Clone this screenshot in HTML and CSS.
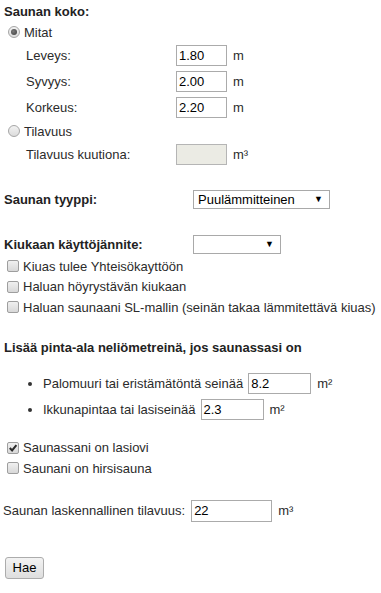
FILE: index.html
```html
<!DOCTYPE html>
<html lang="fi">
<head>
<meta charset="utf-8">
<title>Saunalaskuri</title>
<link rel="stylesheet" href="styles.css">
</head>
<body>
<form class="calc">
  <div class="row heading-row"><span class="heading">Saunan koko:</span></div>
  <div class="row opt-row">
    <span class="radio checked"><span class="dot"></span></span>
    <span class="opt-text">Mitat</span>
  </div>
  <div class="row dim-row">
    <span class="dim-label">Leveys:</span>
    <span class="field w-dim">1.80</span>
    <span class="unit">m</span>
  </div>
  <div class="row dim-row">
    <span class="dim-label">Syvyys:</span>
    <span class="field w-dim">2.00</span>
    <span class="unit">m</span>
  </div>
  <div class="row dim-row">
    <span class="dim-label">Korkeus:</span>
    <span class="field w-dim">2.20</span>
    <span class="unit">m</span>
  </div>
  <div class="row opt-row2">
    <span class="radio"></span>
    <span class="opt-text">Tilavuus</span>
  </div>
  <div class="row vol-row">
    <span class="dim-label">Tilavuus kuutiona:</span>
    <span class="field w-dim disabled"></span>
    <span class="unit">m³</span>
  </div>

  <div class="row select-row type-row">
    <span class="heading sel-label">Saunan tyyppi:</span>
    <span class="select w-type">Puulämmitteinen<span class="arrow">▼</span></span>
  </div>
  <div class="row select-row volt-row">
    <span class="heading sel-label">Kiukaan käyttöjännite:</span>
    <span class="select w-volt"><span class="arrow">▼</span></span>
  </div>

  <div class="cb-group first-group">
    <div class="row cb-row"><span class="cb"></span><span>Kiuas tulee Yhteisökayttöön</span></div>
    <div class="row cb-row"><span class="cb"></span><span>Haluan höyrystävän kiukaan</span></div>
    <div class="row cb-row"><span class="cb"></span><span>Haluan saunaani SL-mallin (seinän takaa lämmitettävä kiuas)</span></div>
  </div>

  <div class="row area-head"><span class="heading">Lisää pinta-ala neliömetreinä, jos saunassasi on</span></div>
  <ul class="area-list">
    <li class="row area-row"><span class="bullet"></span><span>Palomuuri tai eristämätöntä seinää</span><span class="field w-area">8.2</span><span class="unit">m²</span></li>
    <li class="row area-row"><span class="bullet"></span><span>Ikkunapintaa tai lasiseinää</span><span class="field w-area">2.3</span><span class="unit">m²</span></li>
  </ul>

  <div class="cb-group second-group">
    <div class="row cb-row"><span class="cb checked"><svg viewBox="0 0 10 10" width="10" height="10"><path d="M1.8 5 L4.1 7.5 L8.4 2.2" fill="none" stroke="#2a2a2a" stroke-width="2"/></svg></span><span>Saunassani on lasiovi</span></div>
    <div class="row cb-row"><span class="cb"></span><span>Saunani on hirsisauna</span></div>
  </div>

  <div class="row calc-row">
    <span>Saunan laskennallinen tilavuus:</span>
    <span class="field w-calc">22</span>
    <span class="unit">m³</span>
  </div>

  <div class="btn-row"><button type="button" class="btn">Hae</button></div>
</form>
</body>
</html>
```
FILE: styles.css
```css
html, body {
  margin: 0;
  padding: 0;
  background: #ffffff;
}
body {
  font-family: "Liberation Sans", Arial, sans-serif;
  font-size: 13px;
  color: #2b2b2b;
}
.calc {
  padding-left: 4px;
}
.row {
  display: flex;
  align-items: center;
  white-space: nowrap;
}
.heading {
  font-weight: bold;
  font-size: 13px;
  color: #222;
}
.heading-row { height: 22px; }
.opt-row { height: 20px; }
.opt-row2 { height: 22px; }
.dim-row { height: 26px; }
.vol-row { height: 24px; }

.radio {
  width: 12px;
  height: 12px;
  box-sizing: border-box;
  border-radius: 50%;
  border: 1px solid #a6a6a6;
  background: linear-gradient(#f2f2f2, #dcdcdc);
  margin-left: 4px;
  margin-right: 4px;
  display: flex;
  align-items: center;
  justify-content: center;
}
.radio .dot {
  width: 6px;
  height: 6px;
  border-radius: 50%;
  background: radial-gradient(circle at 40% 40%, #7a7a7a, #3a3a3a);
}

.dim-label {
  width: 150px;
  margin-left: 22px;
}
.field {
  box-sizing: border-box;
  height: 21px;
  border: 1px solid #ababab;
  background: #fff;
  color: #000;
  padding-left: 2px;
  display: flex;
  align-items: center;
}
.field.disabled {
  background: #ebebe4;
  border-color: #b5b5b5;
}
.w-dim { width: 51px; }
.w-area { width: 63px; }
.w-calc { width: 81px; height: 22px; }
.unit {
  margin-left: 6px;
}

.select-row { height: 24px; }
.type-row { margin-top: 21px; }
.volt-row { margin-top: 21px; }
.sel-label { width: 189px; }
.select {
  position: relative;
  box-sizing: border-box;
  height: 19px;
  border: 1px solid #a9a9a9;
  background: #fff;
  color: #000;
  padding-left: 4px;
  display: flex;
  align-items: center;
}
.w-type { width: 137px; }
.w-volt { width: 88px; }
.select .arrow {
  position: absolute;
  right: 6px;
  top: 3px;
  font-size: 9px;
  color: #000;
}

.first-group { margin-top: 0; }
.cb-row { height: 20.5px; }
.cb {
  width: 12px;
  height: 12px;
  box-sizing: border-box;
  border: 1px solid #9e9e9e;
  border-radius: 2px;
  background: linear-gradient(#f0f0f0, #d8d8d8);
  margin-left: 3px;
  margin-right: 4px;
  display: flex;
  align-items: center;
  justify-content: center;
}
.cb svg { display: block; }

.area-head { height: 20px; margin-top: 20px; }
.area-list {
  list-style: none;
  margin: 13px 0 0 0;
  padding: 0;
}
.area-row { height: 26px; }
.bullet {
  width: 4px;
  height: 4px;
  border-radius: 50%;
  background: #333;
  margin-left: 24px;
  margin-right: 11px;
}
.area-row .field { margin-left: 5px; }

.second-group { margin-top: 15px; }

.calc-row { height: 24px; margin-top: 20px; margin-left: -1px; }
.calc-row .field { margin-left: 6px; }

.btn-row { margin-top: 34px; }
.btn {
  font-family: "Liberation Sans", Arial, sans-serif;
  font-size: 13px;
  color: #000;
  width: 39px;
  height: 22px;
  padding: 0;
  margin-left: 1px;
  border: 1px solid #acacac;
  border-radius: 3px;
  background: linear-gradient(#f3f3f3, #dedede);
}
```
